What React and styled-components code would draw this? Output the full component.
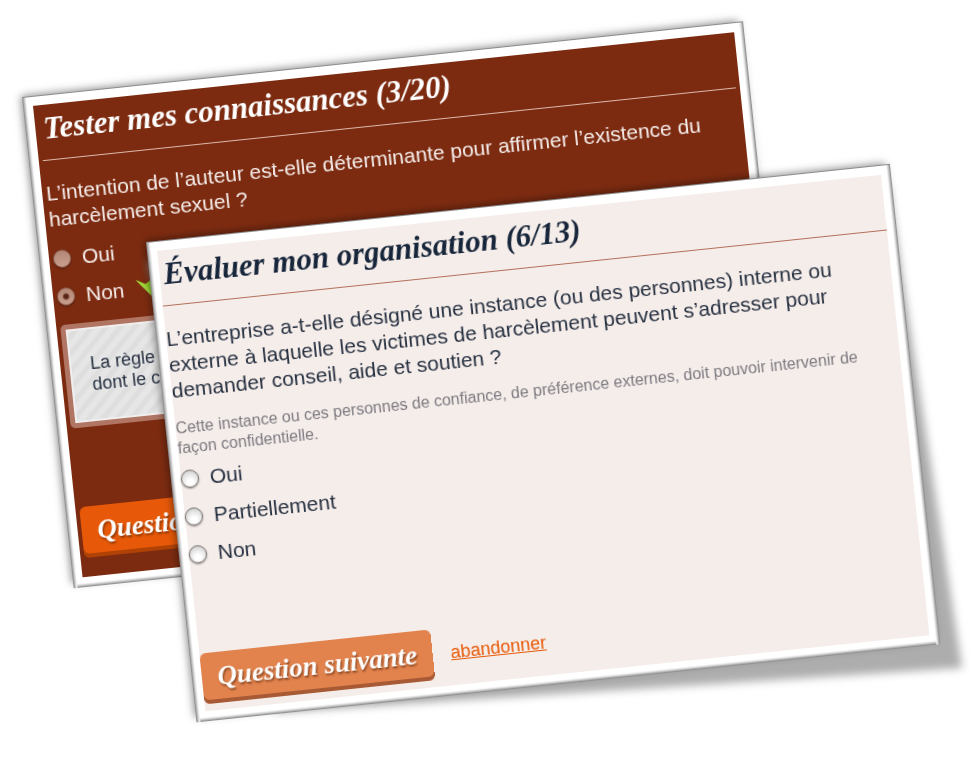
import React from "react";
import styled, { createGlobalStyle } from "styled-components";

const GlobalStyle = createGlobalStyle`
  * {
    box-sizing: border-box;
  }
  body {
    margin: 0;
    background: #ffffff;
    font-family: "Liberation Sans", Arial, sans-serif;
  }
`;

const Desk = styled.main`
  position: relative;
  min-height: 763px;
  overflow: hidden;
`;

const Card = styled.section`
  position: absolute;
  top: ${({ $top }) => $top}px;
  left: ${({ $left }) => $left}px;
  right: ${({ $right }) => $right}px;
  transform: rotate(-6deg);
  transform-origin: 0 0;
  will-change: transform;
`;

const Shadow = styled.div`
  position: absolute;
  inset: 0 -30px -40px 0;
  filter: blur(4px);
  &::before {
    content: "";
    display: block;
    height: 100%;
    background: ${({ $strong }) => ($strong ? "#adadad" : "#f0f0f0")};
    clip-path: polygon(
      0 20px,
      calc(100% - 34px) 20px,
      calc(100% - 11px) calc(100% - 14px),
      80px calc(100% - 42px)
    );
  }
`;

const Sheet = styled.div`
  position: relative;
  display: flex;
  min-height: ${({ $height }) => $height}px;
  padding: 10px;
  background: linear-gradient(#8c8c8c, #8c8c8c) top / 100% 1px no-repeat,
    linear-gradient(to right, #808080, #c8c8c8 2px, #ffffff) left / 4px 100%
      no-repeat,
    linear-gradient(to left, #808080, #c8c8c8 2px, #ffffff) right / 4px 100%
      no-repeat,
    linear-gradient(to top, #808080, #c8c8c8 2px, #ffffff) bottom / 100% 4px
      no-repeat,
    #ffffff;
  box-shadow: -3px -3px 8px -2px rgba(0, 0, 0, 0.45);
`;

const Panel = styled.form`
  display: flex;
  flex-direction: column;
  flex: 1;
  padding: ${({ $dark }) => ($dark ? "0 4px 19px" : "0 0 7px")};
  color: ${({ $dark }) => ($dark ? "#f5edea" : "#263040")};
  background: ${({ $dark }) => ($dark ? "#7d2b10" : "#f5edea")};
`;

const Title = styled.h1`
  margin: 0;
  height: 56px;
  padding-left: 4px;
  border-bottom: 1px solid ${({ $dark }) => ($dark ? "#dcb8aa" : "#b4705a")};
  color: ${({ $dark }) => ($dark ? "#ffffff" : "#17263a")};
  font: italic bold 31px/48px "Liberation Serif", "Times New Roman", serif;
  white-space: nowrap;
`;

const Question = styled.p`
  margin: 0;
  padding: 20px 0 6px;
  font-size: 21px;
  line-height: 26px;
`;

const Hint = styled.p`
  margin: 0;
  padding: 9px 0 0;
  color: #7c7a80;
  font-size: 16px;
  line-height: 20px;
`;

const Options = styled.fieldset`
  display: flex;
  flex-direction: column;
  margin: 0;
  padding: 2px 0 0;
  border: 0;
`;

const Option = styled.label`
  display: flex;
  align-items: center;
  height: 38px;
  gap: 11px;
  font-size: 21px;
`;

const Radio = styled.input`
  appearance: none;
  width: 18px;
  height: 18px;
  margin: 0;
  border: 1px solid #77726f;
  border-radius: 50%;
  background: radial-gradient(circle at 50% 70%, #ffffff 20%, #d4d4d4 80%);
  box-shadow: 0 1px 2px rgba(0, 0, 0, 0.4);
  &:disabled {
    border-color: #8f6354;
    background: linear-gradient(#b38674, #ca9f8f);
  }
  &:disabled:checked {
    background: radial-gradient(circle, #572416 2px, transparent 4px),
      linear-gradient(#b38674, #ca9f8f);
  }
`;

const Feedback = styled.aside`
  height: 104px;
  margin-top: 9px;
  padding: 26px 21px;
  border: 5px solid #b07663;
  border-radius: 5px;
  color: #263040;
  background: repeating-linear-gradient(
    135deg,
    #e6e6e6 0 5px,
    #dedede 6px 10px,
    #e6e6e6 11px
  );
  box-shadow: inset 0 0 0 2px #f1eeee;
  font-size: 18px;
  line-height: 21px;
`;

const Actions = styled.div`
  display: flex;
  align-items: center;
  gap: 18px;
  margin-top: auto;
`;

const Next = styled.button`
  width: 232px;
  height: 51px;
  padding: 0 0 2px;
  border: 0;
  border-radius: 6px;
  color: #ffffff;
  background: ${({ $dark }) => ($dark ? "#e75908" : "#e2834e")};
  box-shadow: inset 0 -4px ${({ $dark }) => ($dark ? "#b04206" : "#a85a35")};
  font: italic bold 27px "Liberation Serif", "Times New Roman", serif;
  text-shadow: 1px 2px 2px rgba(80, 30, 0, 0.6);
  white-space: nowrap;
`;

const Quit = styled.a`
  color: #e75908;
  font-size: 18px;
`;

function Check() {
  return (
    <svg width="24" height="24" viewBox="0 0 24 24" aria-hidden="true">
      <path d="M1 3 10 8 23 0 15 20Z" fill="#8fd220" />
      <path d="M1 3 10 8 14 14 15 20Z" fill="#a4dc3c" />
    </svg>
  );
}

function Choice({ name, label, children, ...rest }) {
  return (
    <Option>
      <Radio type="radio" name={name} {...rest} />
      {label}
      {children}
    </Option>
  );
}

function KnowledgeCard() {
  return (
    <Card $top={97} $left={22} $right={229}>
      <Shadow />
      <Sheet $height={494}>
        <Panel $dark>
          <Title $dark>Tester mes connaissances (3/20)</Title>
          <Question>
            L’intention de l’auteur est-elle déterminante pour affirmer
            l’existence du harcèlement sexuel ?
          </Question>
          <Options aria-label="Réponse">
            <Choice name="knowledge" label="Oui" disabled />
            <Choice name="knowledge" label="Non" disabled defaultChecked>
              <Check />
            </Choice>
          </Options>
          <Feedback>
            La règle
            <br />
            dont le c
          </Feedback>
          <Actions>
            <Next type="button" $dark>
              Question suivante
            </Next>
          </Actions>
        </Panel>
      </Sheet>
    </Card>
  );
}

function OrganisationCard() {
  return (
    <Card $top={242} $left={146} $right={82}>
      <Shadow $strong />
      <Sheet $height={483}>
        <Panel>
          <Title>Évaluer mon organisation (6/13)</Title>
          <Question>
            L’entreprise a-t-elle désigné une instance (ou des personnes)
            interne ou externe à laquelle les victimes de harcèlement peuvent
            s’adresser pour demander conseil, aide et soutien ?
          </Question>
          <Hint>
            Cette instance ou ces personnes de confiance, de préférence
            externes, doit pouvoir intervenir de façon confidentielle.
          </Hint>
          <Options aria-label="Réponse">
            <Choice name="organisation" label="Oui" />
            <Choice name="organisation" label="Partiellement" />
            <Choice name="organisation" label="Non" />
          </Options>
          <Actions>
            <Next type="button">Question suivante</Next>
            <Quit href="#abandonner">abandonner</Quit>
          </Actions>
        </Panel>
      </Sheet>
    </Card>
  );
}

function App() {
  return (
    <Desk>
      <GlobalStyle />
      <KnowledgeCard />
      <OrganisationCard />
    </Desk>
  );
}

export default App;
